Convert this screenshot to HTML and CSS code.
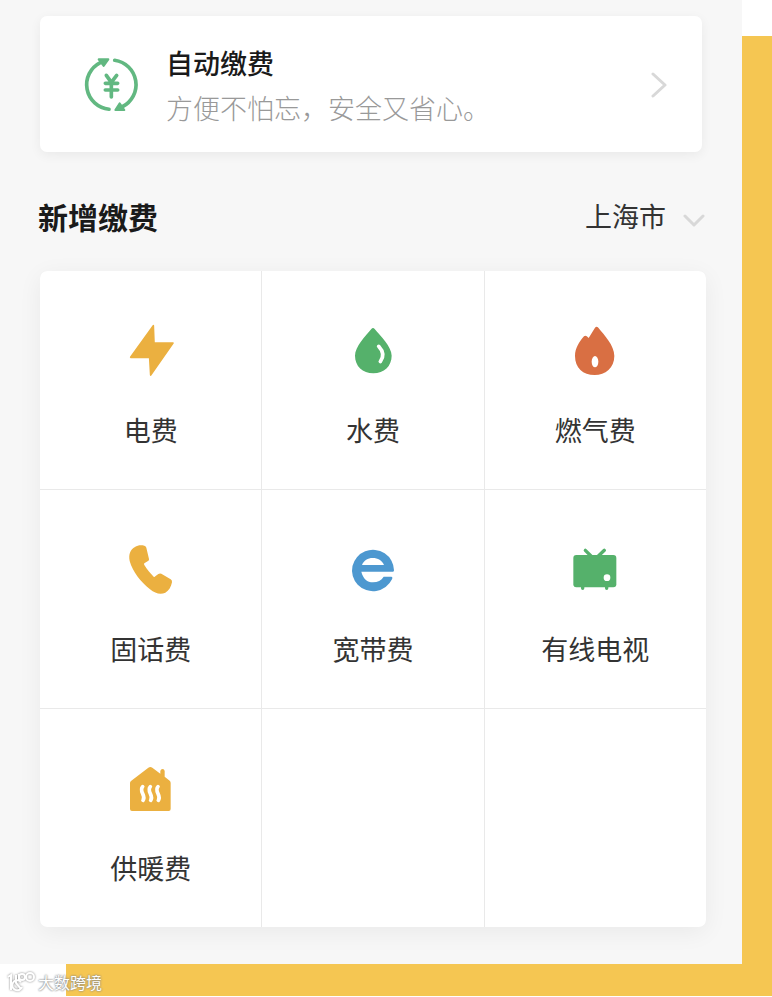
FILE: index.html
```
<!DOCTYPE html>
<html lang="zh-CN">
<head>
	<meta charset="utf-8">
	<meta name="viewport" content="width=device-width, initial-scale=1">
	<title>生活缴费</title>
	<link rel="stylesheet" href="styles.css">
</head>
<body>
<div class="stage">
	<main class="panel">
		<a class="auto_pay" href="#">
			<svg class="auto_icon" viewBox="0 0 240 240" aria-hidden="true">
				<g fill="none" stroke="#62b881" stroke-width="11" stroke-linecap="round">
					<path d="M117 192.7A74 74 0 0 1 91 52.8"/>
					<path d="M134 45.7A74 74 0 0 1 157 185.3"/>
				</g>
				<g fill="#62b881" stroke="#62b881" stroke-width="6" stroke-linejoin="round">
					<path d="M86 43L115 43L101 63Z"/>
					<path d="M136 195L163 195L149 175Z"/>
				</g>
				<path d="M109 91L124 112L140 91M106 115H143M106 135H143M124 112V156" fill="none" stroke="#62b881" stroke-width="11" stroke-linecap="round" stroke-linejoin="round"/>
			</svg>
			<span class="auto_text">
				<strong class="auto_title">自动缴费</strong>
				<span class="auto_desc">方便不怕忘，安全又省心。</span>
			</span>
			<svg class="arrow" viewBox="0 0 16 26" aria-hidden="true">
				<path d="M2 2L14 13L2 24"/>
			</svg>
		</a>

		<div class="head">
			<h2 class="head_title">新增缴费</h2>
			<label class="city">
				<select class="city_select" aria-label="城市">
					<option>上海市</option>
				</select>
				<svg class="city_arrow" viewBox="0 0 22 14" aria-hidden="true">
					<path d="M2 2L11 11L20 2"/>
				</svg>
			</label>
		</div>

		<div class="grid">
			<a class="cell" href="#">
				<svg class="icon" viewBox="0 0 240 240" aria-hidden="true">
					<path d="M127 44L129 96H186L119 192L116 139H59Z" fill="#ebb040" stroke="#ebb040" stroke-width="5" stroke-linejoin="round"/>
				</svg>
				<span class="name">电费</span>
			</a>
			<a class="cell" href="#">
				<svg class="icon" viewBox="0 0 240 240" aria-hidden="true">
					<path d="M115 54Q120 48 125 54C142 74 176 107 176 134C176 165 153 187 121 187C89 187 66 165 66 134C66 107 98 74 115 54Z" fill="#55b16b"/>
					<path d="M137 106Q159 130 142 152" fill="none" stroke="#fff" stroke-width="11" stroke-linecap="round"/>
				</svg>
				<span class="name">水费</span>
			</a>
			<a class="cell" href="#">
				<svg class="icon" viewBox="0 0 240 240" aria-hidden="true">
					<path d="M120 50Q125 44 130 50C148 72 178 103 178 135C178 171 151 192 119 192C84 192 60 171 60 135C60 112 73 92 87 76Q92 71 101 81Z" fill="#d96f43"/>
					<ellipse cx="120" cy="152" rx="10" ry="17" fill="#fff"/>
				</svg>
				<span class="name">燃气费</span>
			</a>
			<a class="cell" href="#">
				<svg class="icon" viewBox="0 0 240 240" aria-hidden="true">
					<path d="M72 51C80 45 91 45 100 47Q105 48 106 53L114 87Q115 91 111 93L100 100Q98 102 100 105C108 118 118 130 128 140Q130 142 133 139L142 132Q146 129 151 131L179 148Q184 151 183 157C180 171 174 182 163 188C149 195 133 191 117 178C88 154 65 125 56 93C52 73 58 59 72 51Z" fill="#ebb040"/>
				</svg>
				<span class="name">固话费</span>
			</a>
			<a class="cell" href="#">
				<svg class="icon" viewBox="0 0 240 240" aria-hidden="true">
					<path d="M87 105C93 91 104 84 119 84C135 84 147 91 153 105ZM180 125Q183 125 183 121A63 62 0 1 0 177 148Q180 140 175 140H152C145 151 134 157 120 157C103 157 90 146 85 125Z" fill="#4d98d0" fill-rule="evenodd"/>
				</svg>
				<span class="name">宽带费</span>
			</a>
			<a class="cell" href="#">
				<svg class="icon" viewBox="0 0 240 240" aria-hidden="true">
					<rect x="55" y="75" width="129" height="97" rx="9" fill="#55b16b"/>
					<path d="M91 61L108 78M148 61L130 78M83 168V175M155 168V175" fill="none" stroke="#55b16b" stroke-width="10" stroke-linecap="round"/>
					<circle cx="156" cy="143" r="10" fill="#fff"/>
				</svg>
				<span class="name">有线电视</span>
			</a>
			<a class="cell" href="#">
				<svg class="icon" viewBox="0 0 240 240" aria-hidden="true">
					<path d="M61 95L112 56Q118 52 124 56L148 74V66Q149 60 155 60Q160 60 161 66V83L176 95Q179 98 179 102V180Q179 186 173 186H63Q57 186 57 180V102Q57 98 61 95Z" fill="#ebb040"/>
					<path d="M95 113C82 128 107 139 96 154M118 113C105 128 130 139 119 154M141 113C128 128 153 139 142 154" fill="none" stroke="#fff" stroke-width="11" stroke-linecap="round"/>
				</svg>
				<span class="name">供暖费</span>
			</a>
			<div class="cell"></div>
			<div class="cell"></div>
		</div>
	</main>
	<footer class="mark">
		<svg class="mark_logo" viewBox="0 0 28 20" aria-hidden="true">
			<path d="M1 5L4 3V18M9 3V11L14 17M14 10A5 5 0 1 0 15 15"/>
			<circle cx="15" cy="5" r="3"/>
			<circle cx="23" cy="5" r="4"/>
			<path d="M12 2V9M18 5H19"/>
		</svg>
		<span class="mark_text">大数跨境</span>
	</footer>
</div>
</body>
</html>
```

FILE: styles.css
```
*{
	box-sizing: border-box;
}
body{
	margin: 0;
	background-color: #fff;
	color: #333;
	font-family: "Noto Sans CJK SC", sans-serif;
	font-size: 27px;
	line-height: 40px;
}
a{
	color: inherit;
	text-decoration: none;
}
/* yellow block sits behind the panel, shifted right and down */
.stage{
	padding-right: 30px;
	background: linear-gradient(#f5c652, #f5c652) no-repeat right bottom;
	background-size: calc(100% - 66px) calc(100% - 36px);
}
.panel{
	padding: 16px 36px 37px 40px;
	background-color: #f7f7f7;
}
.auto_pay{
	display: flex;
	align-items: center;
	height: 136px;
	margin-right: 4px;
	padding: 2px 35px 0 30px;
	border-radius: 7px;
	background-color: #fff;
	box-shadow: 0 3px 12px rgba(0,0,0,0.06);
}
.auto_icon{
	width: 80px;
	height: 80px;
}
.auto_text{
	display: flex;
	flex: 1;
	flex-direction: column;
	gap: 5px;
	margin-left: 16px;
}
.auto_title{
	color: #1a1a1a;
	font-weight: 500;
}
.auto_desc{
	color: #999;
	font-weight: 300;
}
.arrow{
	width: 16px;
	height: 26px;
}
.arrow path, .city_arrow path{
	fill: none;
	stroke: #d8d8d8;
	stroke-width: 3;
	stroke-linecap: round;
	stroke-linejoin: round;
}
.head{
	display: flex;
	align-items: center;
	justify-content: space-between;
	margin: 44px 1px 35px -2px;
}
.head_title{
	margin: 0;
	color: #1a1a1a;
	font-size: 30px;
	font-weight: 700;
}
.city{
	display: flex;
	align-items: center;
	gap: 17px;
}
.city_select{
	height: 40px;
	padding: 0;
	border: 0;
	appearance: none;
	background: none;
	color: #333;
	font: inherit;
}
.city_arrow{
	width: 22px;
	height: 14px;
	margin-top: 10px;
}
.grid{
	display: grid;
	grid-template-columns: repeat(3, 1fr);
	gap: 1px;
	overflow: hidden;
	border-radius: 7px;
	background-color: #e9e9e9;
	box-shadow: 0 5px 24px rgba(0,0,20,0.06);
}
.cell{
	display: flex;
	flex-direction: column;
	align-items: center;
	gap: 19px;
	min-height: 218px;
	padding-top: 40px;
	background-color: #fff;
}
.icon{
	width: 80px;
	height: 80px;
}
.mark{
	display: flex;
	align-items: center;
	gap: 3px;
	height: 32px;
	padding: 4px 7px 0;
	color: #fff;
	font-size: 16px;
	line-height: 24px;
}
.mark_logo{
	width: 28px;
	height: 20px;
	fill: none;
	stroke: #fff;
	stroke-width: 2;
	filter: drop-shadow(0 0 1px #888);
}
.mark_text{
	text-shadow: 0 0 2px #888, 0 0 2px #888;
}
```
